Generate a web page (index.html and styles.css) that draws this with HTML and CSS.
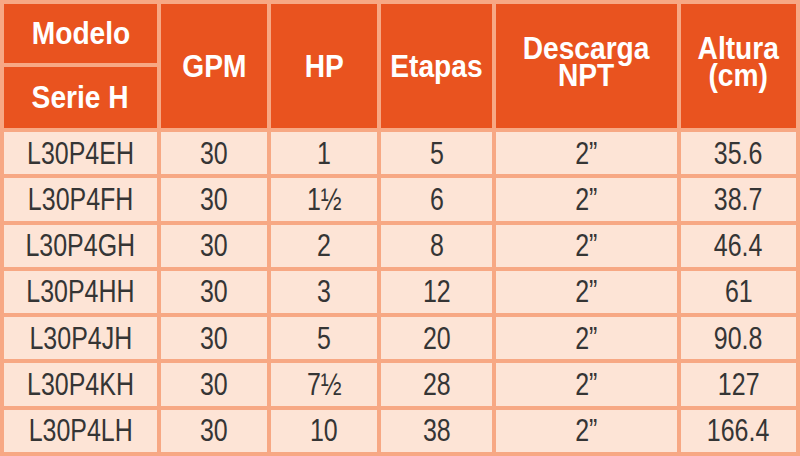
FILE: index.html
```html
<!DOCTYPE html>
<html lang="es">
<head>
<meta charset="utf-8">
<title>Serie H</title>
<link rel="stylesheet" href="styles.css">
</head>
<body>
<div class="table">
  <div class="hd h-model"><span>Modelo</span></div>
  <div class="hd h-span2 c2"><span>GPM</span></div>
  <div class="hd h-span2 c3"><span>HP</span></div>
  <div class="hd h-span2 c4"><span>Etapas</span></div>
  <div class="hd h-span2 two c5"><span>Descarga<br>NPT</span></div>
  <div class="hd h-span2 two c6"><span>Altura<br>(cm)</span></div>
  <div class="hd h-serie"><span>Serie H</span></div>

  <div class="td"><span>L30P4EH</span></div><div class="td"><span>30</span></div><div class="td"><span>1</span></div><div class="td"><span>5</span></div><div class="td"><span>2”</span></div><div class="td"><span>35.6</span></div>
  <div class="td"><span>L30P4FH</span></div><div class="td"><span>30</span></div><div class="td"><span>1½</span></div><div class="td"><span>6</span></div><div class="td"><span>2”</span></div><div class="td"><span>38.7</span></div>
  <div class="td"><span>L30P4GH</span></div><div class="td"><span>30</span></div><div class="td"><span>2</span></div><div class="td"><span>8</span></div><div class="td"><span>2”</span></div><div class="td"><span>46.4</span></div>
  <div class="td"><span>L30P4HH</span></div><div class="td"><span>30</span></div><div class="td"><span>3</span></div><div class="td"><span>12</span></div><div class="td"><span>2”</span></div><div class="td"><span>61</span></div>
  <div class="td"><span>L30P4JH</span></div><div class="td"><span>30</span></div><div class="td"><span>5</span></div><div class="td"><span>20</span></div><div class="td"><span>2”</span></div><div class="td"><span>90.8</span></div>
  <div class="td"><span>L30P4KH</span></div><div class="td"><span>30</span></div><div class="td"><span>7½</span></div><div class="td"><span>28</span></div><div class="td"><span>2”</span></div><div class="td"><span>127</span></div>
  <div class="td"><span>L30P4LH</span></div><div class="td"><span>30</span></div><div class="td"><span>10</span></div><div class="td"><span>38</span></div><div class="td"><span>2”</span></div><div class="td"><span>166.4</span></div>
</div>
</body>
</html>
```
FILE: styles.css
```css
html, body {
  margin: 0;
  padding: 0;
  background: #f7a884;
}
.table {
  width: 800px;
  height: 456px;
  box-sizing: border-box;
  padding: 4px;
  display: grid;
  grid-template-columns: 153px 106px 106px 111px 181px 115px;
  grid-template-rows: 59px 61px repeat(7, 1fr);
  gap: 4px;
  background: #f7a884;
}
.hd {
  background: #e9531f;
  color: #ffffff;
  font-family: "Liberation Sans", Arial, sans-serif;
  font-weight: bold;
  font-size: 32px;
  line-height: 27px;
  display: flex;
  align-items: center;
  justify-content: center;
  text-align: center;
}
.hd span {
  display: inline-block;
  transform: scaleX(0.88);
}
.two {
  padding-bottom: 8px;
}
.h-model { grid-column: 1; grid-row: 1; }
.h-serie { grid-column: 1; grid-row: 2; }
.h-span2 { grid-row: 1 / span 2; }
.c2 { grid-column: 2; }
.c3 { grid-column: 3; }
.c4 { grid-column: 4; }
.c5 { grid-column: 5; }
.c6 { grid-column: 6; }
.td {
  background: #fde4d6;
  color: #353535;
  font-family: "Liberation Sans", Arial, sans-serif;
  font-size: 32px;
  display: flex;
  align-items: center;
  justify-content: center;
}
.td span {
  display: inline-block;
  transform: scaleX(0.78);
}
```
